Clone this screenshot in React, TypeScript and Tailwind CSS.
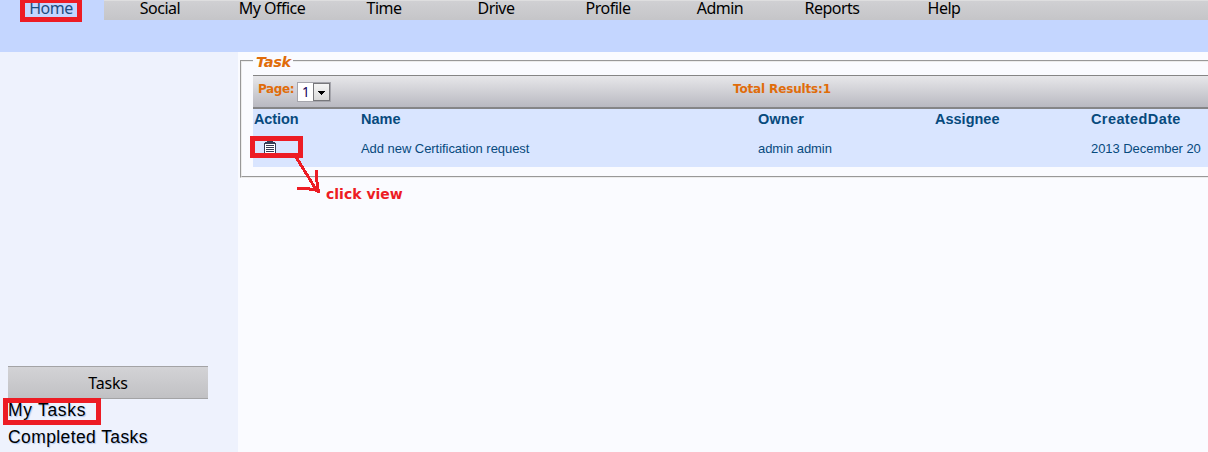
import React from "react";

const navItems = ["Social", "My Office", "Time", "Drive", "Profile", "Admin", "Reports", "Help"];

const columns = "grid grid-cols-[108px_397px_177px_156px_118px]";

function TopNav() {
  return (
    <header className="relative h-[52px] bg-[#c4d6ff]">
      <nav className="flex h-5 font-['Noto_Sans',sans-serif] text-[16px] leading-[17px] tracking-[-0.5px] text-black">
        <a className="w-[104px] pr-[2px] text-center text-[#1d4c80]">Home</a>
        <div className="flex h-5 flex-1 border-t border-[#dededf] bg-linear-to-b from-[#d0d0d3] to-[#c5c5c8]">
          {navItems.map((label) => (
            <a key={label} className="-mt-px w-[112px] text-center">
              {label}
            </a>
          ))}
        </div>
      </nav>
      <div className="absolute -top-[2px] left-5 h-6 w-[62px] border-[5px] border-[#ed1c24]" />
    </header>
  );
}

function Sidebar() {
  return (
    <aside className="relative w-[238px] bg-[#eef2fd] pt-[314px] pl-2">
      <div className="h-[33px] w-[200px] border-y border-[#a3a3a5] bg-linear-to-b from-[#d3d3d6] to-[#c1c1c4] text-center font-['Noto_Sans',sans-serif] text-[16px] leading-[33px] tracking-[-0.2px] text-black">
        Tasks
      </div>
      <ul className="font-['Liberation_Sans',sans-serif] text-[17.5px] leading-[27px] tracking-[0.4px] text-black [text-shadow:1px_1px_1px_#a9c4ee]">
        <li className="-mt-[2px] tracking-[0.7px]">My Tasks</li>
        <li>Completed Tasks</li>
      </ul>
      <div className="absolute top-[346px] left-[3px] h-[27px] w-[98px] border-[5px] border-[#ed1c24]" />
    </aside>
  );
}

function ClipboardIcon() {
  return (
    <svg className="h-[14px] w-[12px]" viewBox="0 0 12 14" shapeRendering="crispEdges">
      <path d="M0 3h12v11H0z" fill="#343b55" />
      <path d="M1 4h10v10H1z" fill="#fff" />
      <path d="M3 1h6v1h2v2H1V2h2z" fill="#343b55" />
      <path d="M2 5h8v1H2zM2 7h8v1H2zM2 9h8v1H2zM2 11h8v1H2z" fill="#343b55" />
    </svg>
  );
}

function PageSelect() {
  return (
    <div className="flex h-5 w-[34px] border border-[#a5a5ac] bg-white">
      <span className="flex-1 pl-[4px] font-['Noto_Sans',sans-serif] text-[13.5px] leading-[19px] text-[#17005c]">1</span>
      <span className="flex w-[17px] items-center justify-center border border-[#77777b] bg-linear-to-b from-[#f5f5f5] to-[#d9d9d9] pt-[2px]">
        <svg className="h-1 w-[7px]" viewBox="0 0 7 4" shapeRendering="crispEdges">
          <path d="M0 0h7v1H6v1H5v1H4v1H3V3H2V2H1V1H0z" fill="#000" />
        </svg>
      </span>
    </div>
  );
}

function TaskPanel() {
  return (
    <main className="relative flex-1 overflow-hidden bg-[#fafbff] pl-[2px]">
      <fieldset className="h-[126px] w-[980px] border-2 border-[#ececec] pl-[11px] [border-style:groove]">
        <legend className="h-[18px] w-[40px] pl-[3px] font-['DejaVu_Sans',sans-serif] text-[14.5px] leading-[20px] font-bold tracking-[-0.4px] text-[#e06c0a] italic">
          Task
        </legend>
        <div className="mt-[5px] h-[34px] border-t border-b-2 border-t-[#858585] border-b-[#858587] bg-linear-to-b from-[#e7e7ea] to-[#b9b9c1]">
          <div className="flex h-[31px] font-['DejaVu_Sans',sans-serif] text-[12px] leading-[26px] font-bold text-[#e06c0a]">
            <span className="w-[44px] pl-[5px] tracking-[-0.4px]">Page:</span>
            <div className="w-[436px] pt-[6px] font-normal">
              <PageSelect />
            </div>
            <span className="tracking-[-0.15px]">Total Results:1</span>
          </div>
        </div>
        <div className="h-[58px] bg-[#d9e5ff] font-['Liberation_Sans',sans-serif] text-[#074a7d]">
          <div className={`${columns} h-[26px] text-[14.5px] leading-[20px] font-bold`}>
            <span className="pl-px tracking-[-0.1px]">Action</span>
            <span>Name</span>
            <span className="tracking-[0.2px]">Owner</span>
            <span>Assignee</span>
            <span className="tracking-[0.4px]">CreatedDate</span>
          </div>
          <div className={`${columns} text-[13px] leading-[27px] tracking-[-0.05px]`}>
            <span className="pt-[5px] pl-[11px]">
              <ClipboardIcon />
            </span>
            <span>Add new Certification request</span>
            <span>admin admin</span>
            <span />
            <span className="whitespace-nowrap">2013 December 20</span>
          </div>
        </div>
      </fieldset>
      <div className="absolute top-[84px] left-3 h-[22px] w-[53px] border-[5px] border-[#ed1c24]" />
      <svg className="absolute top-[104px] left-[57px] h-[38px] w-[26px]" viewBox="0 0 26 38" fill="none" stroke="#ed1c24" strokeWidth="3" shapeRendering="crispEdges">
        <path d="M1 1 22 35M1.5 32h7l6 1h5l4 3M21.5 14v9l1 6 1 8" />
      </svg>
      <strong className="absolute top-[133px] left-[88px] font-['DejaVu_Sans',sans-serif] text-[14px] leading-[18px] whitespace-nowrap text-[#ed1c24]">
        click view
      </strong>
    </main>
  );
}

export default function App() {
  return (
    <div className="flex h-[452px] w-[1208px] flex-col overflow-hidden">
      <TopNav />
      <div className="flex flex-1">
        <Sidebar />
        <TaskPanel />
      </div>
    </div>
  );
}
